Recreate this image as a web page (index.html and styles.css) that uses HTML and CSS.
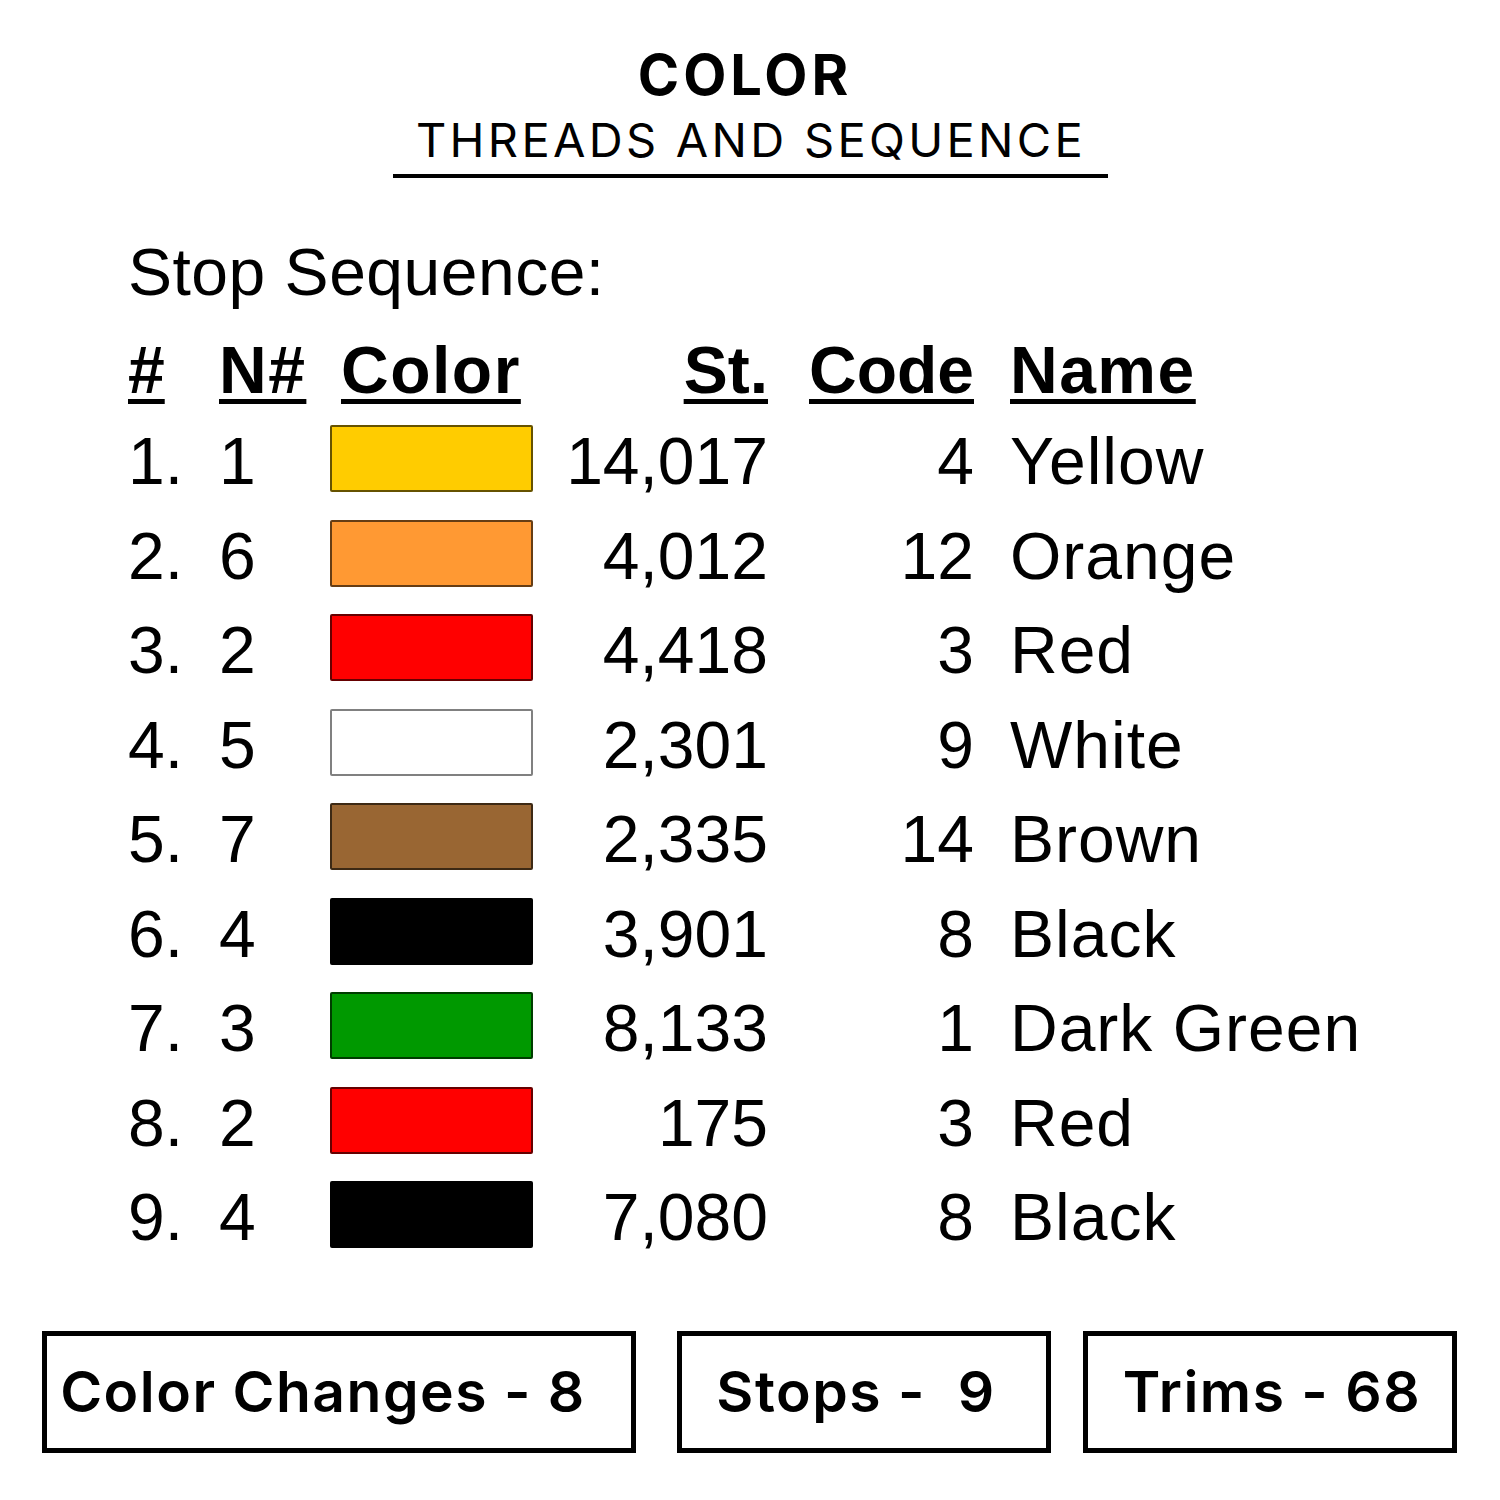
FILE: index.html
```html
<!DOCTYPE html>
<html lang="en">
<head>
<meta charset="utf-8">
<title>Color Threads and Sequence</title>
<link rel="stylesheet" href="styles.css">
</head>
<body>
<div class="page">
  <header class="heading">
    <div class="title">COLOR</div>
    <div class="subtitle">THREADS AND SEQUENCE</div>
  </header>

  <section class="sequence">
    <div class="seq-label">Stop Sequence:</div>
    <div class="table">
      <div class="row head">
        <div class="c-num"><span class="u">#</span></div>
        <div class="c-n"><span class="u">N#</span></div>
        <div class="c-color"><span class="u">Color</span></div>
        <div class="c-st"><span class="u">St.</span></div>
        <div class="c-code"><span class="u">Code</span></div>
        <div class="c-name"><span class="u">Name</span></div>
      </div>
      <div class="row">
        <div class="c-num">1.</div><div class="c-n">1</div>
        <div class="c-color"><div class="swatch yellow"></div></div>
        <div class="c-st">14,017</div><div class="c-code">4</div><div class="c-name">Yellow</div>
      </div>
      <div class="row">
        <div class="c-num">2.</div><div class="c-n">6</div>
        <div class="c-color"><div class="swatch orange"></div></div>
        <div class="c-st">4,012</div><div class="c-code">12</div><div class="c-name">Orange</div>
      </div>
      <div class="row">
        <div class="c-num">3.</div><div class="c-n">2</div>
        <div class="c-color"><div class="swatch red"></div></div>
        <div class="c-st">4,418</div><div class="c-code">3</div><div class="c-name">Red</div>
      </div>
      <div class="row">
        <div class="c-num">4.</div><div class="c-n">5</div>
        <div class="c-color"><div class="swatch white"></div></div>
        <div class="c-st">2,301</div><div class="c-code">9</div><div class="c-name">White</div>
      </div>
      <div class="row">
        <div class="c-num">5.</div><div class="c-n">7</div>
        <div class="c-color"><div class="swatch brown"></div></div>
        <div class="c-st">2,335</div><div class="c-code">14</div><div class="c-name">Brown</div>
      </div>
      <div class="row">
        <div class="c-num">6.</div><div class="c-n">4</div>
        <div class="c-color"><div class="swatch black"></div></div>
        <div class="c-st">3,901</div><div class="c-code">8</div><div class="c-name">Black</div>
      </div>
      <div class="row">
        <div class="c-num">7.</div><div class="c-n">3</div>
        <div class="c-color"><div class="swatch green"></div></div>
        <div class="c-st">8,133</div><div class="c-code">1</div><div class="c-name">Dark Green</div>
      </div>
      <div class="row">
        <div class="c-num">8.</div><div class="c-n">2</div>
        <div class="c-color"><div class="swatch red"></div></div>
        <div class="c-st">175</div><div class="c-code">3</div><div class="c-name">Red</div>
      </div>
      <div class="row">
        <div class="c-num">9.</div><div class="c-n">4</div>
        <div class="c-color"><div class="swatch black"></div></div>
        <div class="c-st">7,080</div><div class="c-code">8</div><div class="c-name">Black</div>
      </div>
    </div>
  </section>

  <footer class="stats">
    <div class="stat stat-wide">Color Changes - 8</div>
    <div class="stat stat-mid">Stops -  9</div>
    <div class="stat stat-last">Trims - 68</div>
  </footer>
</div>
</body>
</html>
```

FILE: styles.css
```css
* { box-sizing: border-box; }

html, body {
  margin: 0;
  padding: 0;
  background: #ffffff;
  color: #000000;
}

.page {
  width: 1500px;
  height: 1500px;
  padding-top: 47px;
}

.heading {
  display: flex;
  flex-direction: column;
  align-items: center;
}

.title {
  font-family: Inter, "Open Sans", sans-serif;
  font-weight: 700;
  font-size: 56px;
  line-height: 1;
  letter-spacing: 4px;
  height: 56px;
  padding-right: 10px;
}

.subtitle {
  margin-top: 13px;
  width: 715px;
  text-align: center;
  font-family: Inter, "Open Sans", sans-serif;
  font-weight: 400;
  font-size: 47px;
  line-height: 1;
  letter-spacing: 3.3px;
  padding-bottom: 11px;
  padding-left: 2px;
  border-bottom: 4px solid #000;
}

.sequence {
  margin-top: 61px;
  padding-left: 128px;
  font-family: "Liberation Sans", Arial, sans-serif;
  font-size: 66px;
}

.seq-label {
  line-height: 66px;
  height: 66px;
  letter-spacing: 0.5px;
}

.table {
  margin-top: 21px;
}

.row {
  display: grid;
  grid-template-columns: 91px 111px 203px 237px 208px auto;
  height: 94.5px;
  line-height: 94.5px;
  white-space: nowrap;
}

.row.head {
  height: 88px;
  line-height: 88px;
  font-weight: 700;
}

.u {
  text-decoration: underline;
  text-decoration-thickness: 5px;
  text-underline-offset: 6px;
}

.head .c-n .u,
.head .c-color .u,
.head .c-name .u { letter-spacing: 1.5px; }

.head .c-color { padding-left: 11px; }

.c-st, .c-code { text-align: right; }
.c-st { padding-right: 2px; }
.c-code { padding-right: 4px; }
.c-name { padding-left: 32px; letter-spacing: 1px; }

.swatch {
  margin-top: 11px;
  width: 203px;
  height: 67px;
  border: 2px solid rgba(0, 0, 0, 0.6);
  border-radius: 2px;
}

.yellow { background: #ffcc00; }
.orange { background: #ff9933; }
.red { background: #ff0000; }
.white { background: #ffffff; border-color: #808080; }
.brown { background: #996633; }
.black { background: #000000; }
.green { background: #009900; }

.stats {
  margin-top: 66px;
  display: flex;
  padding-left: 42px;
}

.stat {
  height: 122px;
  border: 5px solid #000;
  display: flex;
  align-items: center;
  justify-content: center;
  font-family: Inter, "Open Sans", sans-serif;
  font-weight: 600;
  font-size: 57px;
  line-height: 1;
  letter-spacing: 1.5px;
  white-space: pre;
}

.stat-wide { width: 594px; padding-right: 32px; }
.stat-mid { width: 374px; margin-left: 41px; padding-right: 16px; }
.stat-last { width: 374px; margin-left: 32px; padding-left: 4px; }
```
